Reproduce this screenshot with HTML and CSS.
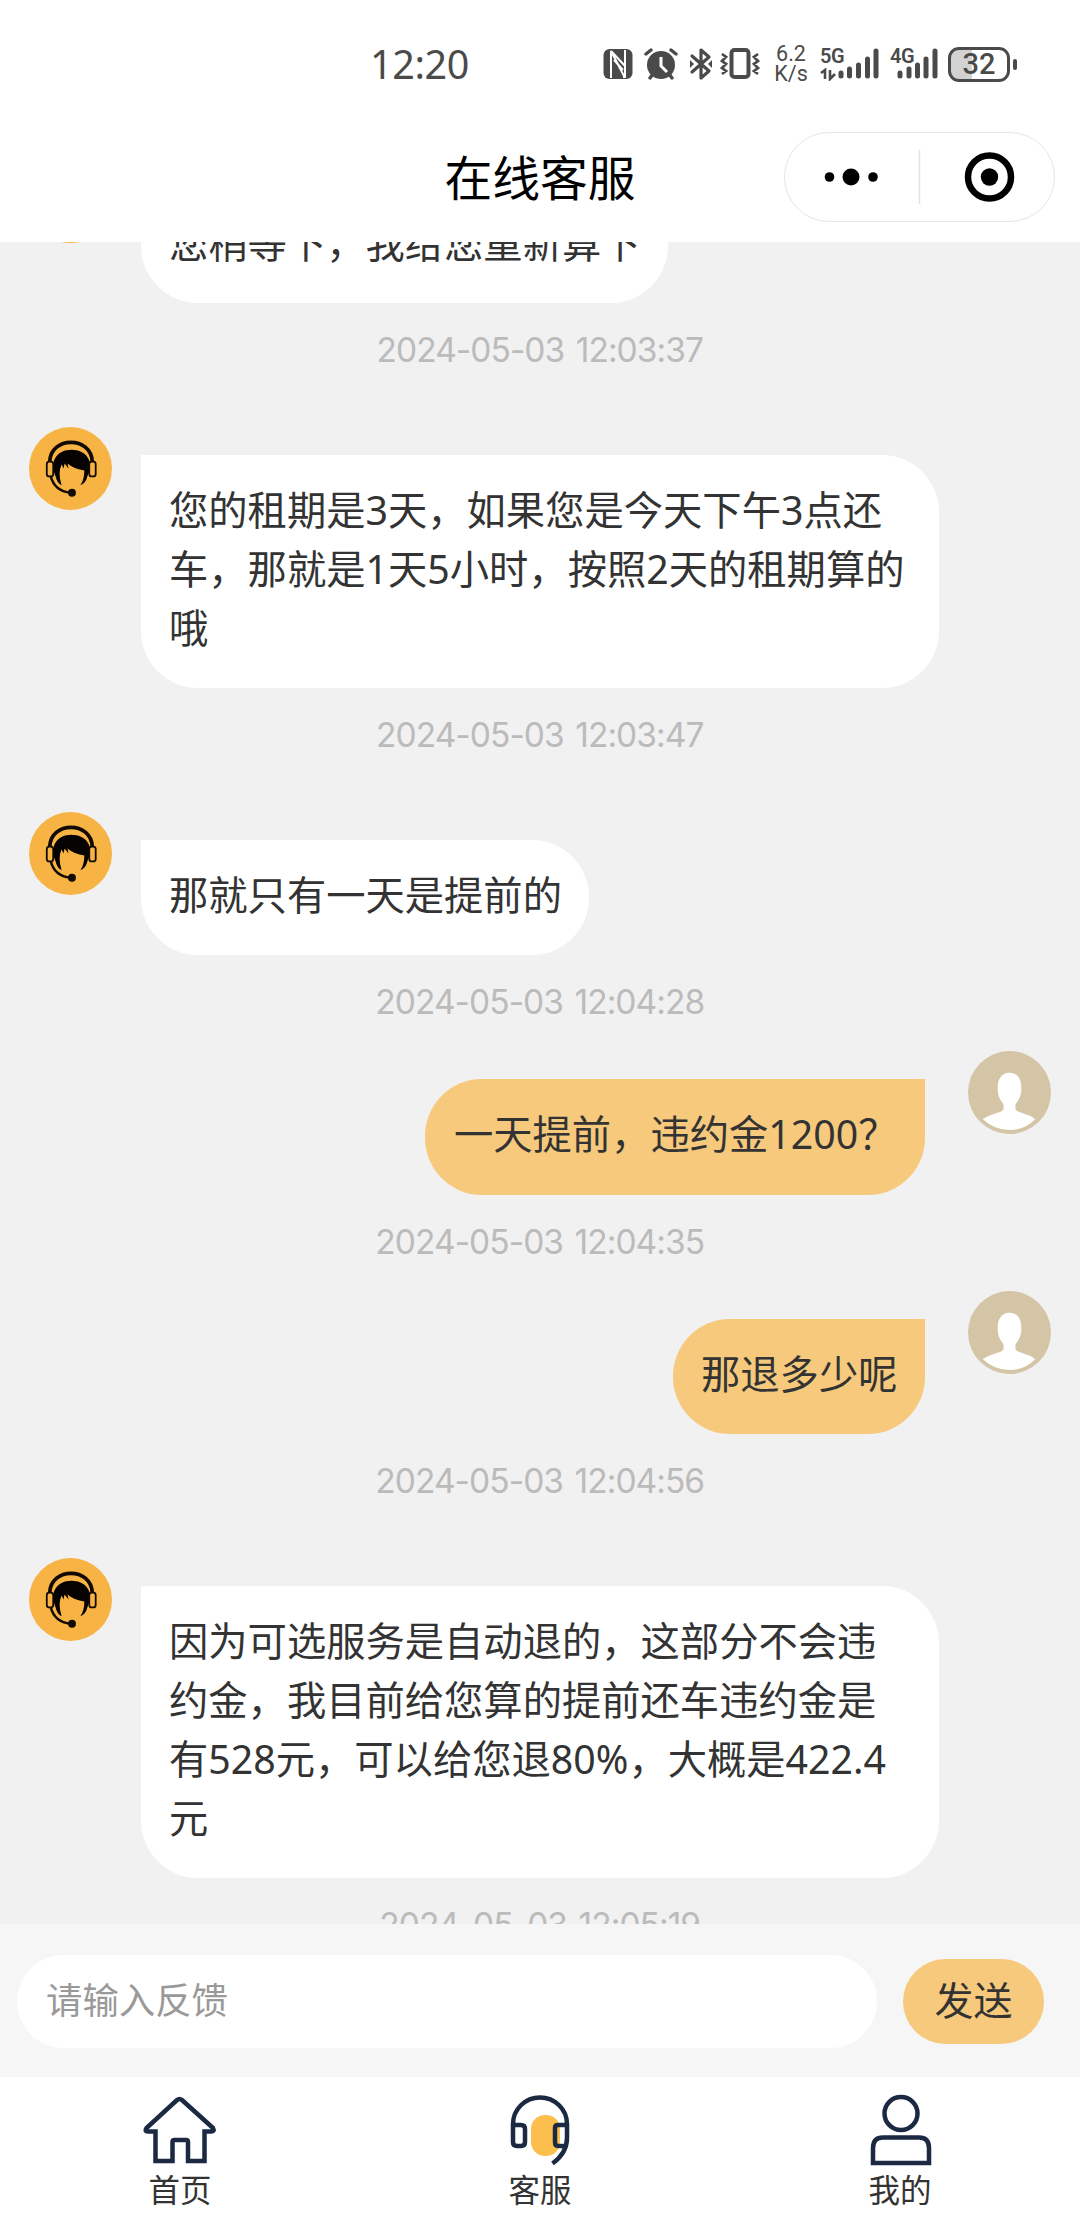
FILE: index.html
```html
<!DOCTYPE html>
<html lang="zh-CN">
<head>
<meta charset="utf-8">
<title>在线客服</title>
<link rel="stylesheet" href="styles.css">
</head>
<body>
<svg class="defs" width="0" height="0" aria-hidden="true">
  <symbol id="agent" viewBox="0 0 84 84">
    <circle cx="42" cy="42" r="42" fill="#f7b343"/>
    <path d="M21 35C22 9 63 9 64 35" fill="none" stroke="#120a05" stroke-width="3.800"/>
    <path d="M27 50Q28 56 33 59Q29 46 33 38L35 42L36 37L40 42L39 37Q46 43 56 44Q56 53 52 59Q58 56 59 50C67 34 57 23 43 23S20 34 27 50Z" fill="#050201"/>
    <rect x="18" y="35" width="6.500" height="15" rx="2.500" fill="#f7b343" stroke="#120a05" stroke-width="1.800"/>
    <rect x="61" y="35" width="6.500" height="15" rx="2.500" fill="#f7b343" stroke="#120a05" stroke-width="1.800"/>
    <path d="M22 50Q26 65 42 66.500" fill="none" stroke="#120a05" stroke-width="2.400"/>
    <circle cx="43.500" cy="66.500" r="4" fill="#120a05"/>
  </symbol>
  <symbol id="guest" viewBox="0 0 84 84">
    <circle cx="42" cy="42" r="42" fill="#d5c5a7"/>
    <path d="M42 22C50 22 54 28 54 38C54 46 51 50 48 54V59C50 63 61 63 68 69Q57 80 42 80T15 69C23 63 34 63 36 59V54C33 50 30 46 30 38C30 28 34 22 42 22Z" fill="#fff"/>
  </symbol>
</svg>
<div class="phone">
  <header class="status">
    <time class="clock">12:20</time>
    <div class="indicators">
      <svg class="nfc" width="30" height="32" viewBox="0 0 30 32"><rect x="0.500" y="1" width="29" height="30" rx="6" fill="#4a4a4a"/><path d="M8 30V3L21 28V30M8 3L22 18V30M22 2V18M11 12L20 22" fill="none" stroke="#fff" stroke-width="2"/></svg>
      <svg class="alarm" width="34" height="34" viewBox="0 0 34 34"><g fill="none" stroke="#4a4a4a" stroke-width="3.400" stroke-linecap="round"><path d="M2 7L7 3M32 7L27 3M6 31L9 27M28 31L25 27"/></g><circle cx="17" cy="18" r="14" fill="#4a4a4a"/><path d="M17 10V19L23 25" fill="none" stroke="#fff" stroke-width="3"/></svg>
      <svg class="bluetooth" width="24" height="34" viewBox="0 0 24 34"><path d="M3 9L20 24L12 31V3L20 10L3 25" fill="none" stroke="#4a4a4a" stroke-width="3.200" stroke-linejoin="round" stroke-linecap="round"/><path d="M1 13L5 17L1 21ZM23 13L19 17L23 21Z" fill="#4a4a4a"/></svg>
      <svg class="vibrate" width="40" height="34" viewBox="0 0 40 34"><rect x="11.500" y="3" width="17" height="27" rx="3" fill="none" stroke="#4a4a4a" stroke-width="4"/><path d="M2 7L6 10L2 14L6 17L2 21L6 24L2 27M38 7L34 10L38 14L34 17L38 21L34 24L38 27" fill="none" stroke="#4a4a4a" stroke-width="2.800"/></svg>
      <div class="speed"><span>6.2</span><span>K/s</span></div>
      <div class="signal five"><b>5G</b><svg width="59" height="34" viewBox="0 0 59 34"><g stroke="#4a4a4a" stroke-width="5" stroke-linecap="round"><path d="M21 26V29M29.500 22V29M38.500 18V29M47.500 12V29M56 4V29"/></g><path d="M1 26L5 23V32M10 23V32L15 27" fill="none" stroke="#4a4a4a" stroke-width="2.600"/></svg></div>
      <div class="signal four"><b>4G</b><svg width="48" height="34" viewBox="0 0 48 34"><g stroke="#4a4a4a" stroke-width="5" stroke-linecap="round"><path d="M10 26V29M19 22V29M27.500 18V29M36 12V29M45 4V29"/></g></svg></div>
      <div class="battery"><span class="cell">32</span><i class="tip"></i></div>
    </div>
  </header>
  <div class="titlebar">
    <h1>在线客服</h1>
    <div class="capsule">
      <svg width="269" height="88" viewBox="0 0 269 88"><g><circle cx="44.500" cy="44" r="4.800"/><circle cx="66" cy="44" r="8.500"/><circle cx="88" cy="44" r="4.800"/><circle cx="204.500" cy="44" r="21.500" fill="none" stroke="#000" stroke-width="6.500"/><circle cx="204.500" cy="44" r="8.700"/></g><path d="M134.500 17V71" stroke="#e2e2e2" stroke-width="1.500"/></svg>
    </div>
  </div>
  <main class="chat">
    <section class="message"><svg class="avatar"><use href="#agent"/></svg><p class="bubble">您稍等下，我给您重新算下</p></section>
    <time class="stamp">2024-05-03 12:03:37</time>
    <section class="message"><svg class="avatar"><use href="#agent"/></svg><p class="bubble">您的租期是3天，如果您是今天下午3点还车，那就是1天5小时，按照2天的租期算的哦</p></section>
    <time class="stamp">2024-05-03 12:03:47</time>
    <section class="message"><svg class="avatar"><use href="#agent"/></svg><p class="bubble">那就只有一天是提前的</p></section>
    <time class="stamp">2024-05-03 12:04:28</time>
    <section class="message mine"><p class="bubble">一天提前，违约金1200？</p><svg class="avatar"><use href="#guest"/></svg></section>
    <time class="stamp">2024-05-03 12:04:35</time>
    <section class="message mine"><p class="bubble">那退多少呢</p><svg class="avatar"><use href="#guest"/></svg></section>
    <time class="stamp">2024-05-03 12:04:56</time>
    <section class="message"><svg class="avatar"><use href="#agent"/></svg><p class="bubble">因为可选服务是自动退的，这部分不会违约金，我目前给您算的提前还车违约金是有528元，可以给您退80%，大概是422.4元</p></section>
    <time class="stamp">2024-05-03 12:05:19</time>
  </main>
  <form class="composer">
    <input class="field" type="text" placeholder="请输入反馈">
    <button class="send" type="button">发送</button>
  </form>
  <nav class="tabs">
    <a class="tab"><svg width="76" height="76" viewBox="0 0 76 76"><path d="M35 8Q37.500 6 40 8L71 36Q73 39.500 69 39.500H62.500V69H46V50Q46 48 44 48H32.500Q30.500 48 30.500 50V69H13.500V39.500H6Q2 39.500 4.500 36Z"/></svg><span>首页</span></a>
    <a class="tab"><svg width="76" height="76" viewBox="0 0 76 76"><rect class="glow" x="29" y="23" width="29" height="41" rx="14"/><path d="M11 50V32A27 26.500 0 0 1 65 32V46Q65 61 50.500 71.500M11 33H19Q23 33 23 37V50Q23 54 19 54H15Q11 54 11 50M65 33H56Q53 33 53 36V50Q53 54 56 54H64"/></svg><span>客服</span></a>
    <a class="tab"><svg width="76" height="76" viewBox="0 0 76 76"><circle cx="39" cy="21.500" r="16.500"/><path d="M11 71V56Q11 45.500 21 45.500H57Q67 45.500 67 56V71Z"/></svg><span>我的</span></a>
  </nav>
</div>
</body>
</html>
```

FILE: styles.css
```css
* { box-sizing: border-box; }
body { margin: 0; background: #fff; font-family: "Noto Sans", "Noto Sans CJK SC", sans-serif; color: #333; }
.defs { display: block; height: 0; }
.phone { display: flex; flex-direction: column; width: 1080px; height: 2228px; overflow: hidden; }

.status { display: flex; align-items: center; height: 128px; flex: none; padding-left: 370px; color: #4a4a4a; }
.clock { width: 233px; font-size: 39.5px; line-height: 50px; letter-spacing: -0.4px; }
.indicators { display: flex; align-items: center; height: 36px; }
.alarm { margin-left: 11px; }
.bluetooth { margin-left: 11px; }
.vibrate { margin-left: 7px; }
.speed { display: flex; flex-direction: column; width: 34px; margin-left: 14px; font: 21.5px/20px Roboto, sans-serif; text-align: center; white-space: nowrap; }
.signal { position: relative; height: 34px; }
.signal svg { display: block; }
.signal b { position: absolute; left: 0; top: 0; font: 600 20px/18px Roboto, sans-serif; letter-spacing: -0.5px; }
.five { margin-left: 12px; }
.four { margin-left: 11px; }
.battery { display: flex; align-items: center; gap: 3px; margin-left: 10px; }
.cell { width: 62px; height: 35px; border: 3px solid #4a4a4a; border-radius: 11px; background: linear-gradient(90deg, #d2d2d2 38%, #fff 38%); font: 500 29px/29px Roboto, sans-serif; text-align: center; }
.tip { width: 4px; height: 11px; border-radius: 2px; background: #4a4a4a; }

.titlebar { position: relative; display: flex; align-items: center; justify-content: center; flex: none; height: 114px; padding-bottom: 14px; }
h1 { margin: 0; color: #000; font-size: 47.8px; font-weight: 400; line-height: 64px; }
.capsule { position: absolute; left: 784px; top: 4px; width: 271px; height: 90px; border: 1.5px solid #e6e6e6; border-radius: 45px; }
.capsule svg { display: block; }

.chat { display: flex; flex-direction: column; flex: none; height: 1682px; padding: 0 29px 0 28.5px; overflow: hidden; background: #f1f1f1; }
.message { display: flex; align-items: flex-start; flex: none; gap: 29px; padding-top: 28px; }
.message:first-child { margin-top: -110px; }
.avatar { width: 83px; height: 83px; flex: none; }
.bubble { max-width: 798px; margin: 28px 0 0; padding: 26px 27.5px 30px 28.5px; border-radius: 0 57px 57px 57px; background: #fff; font-size: 39.3px; line-height: 59.1px; }
.mine { justify-content: flex-end; gap: 43px; padding-top: 0; }
.mine .bubble { border-radius: 57px 0 57px 57px; background: #f6c97c; }
.stamp { display: block; flex: none; height: 96px; color: #bbb; font-family: Inter, sans-serif; font-size: 33.5px; line-height: 94px; text-align: center; letter-spacing: -0.95px; word-spacing: 3px; }

.composer { display: flex; align-items: center; flex: none; gap: 26px; height: 153px; padding: 2px 36px 0 17px; background: #f6f6f6; }
.field { width: 860px; height: 93px; padding: 0 29px 4px; border: 0; border-radius: 47px; background: #fff; font: inherit; font-size: 36.4px; }
.field::placeholder { color: #999; opacity: 1; }
.send { width: 141px; height: 85px; padding: 0 0 8px; border: 0; border-radius: 43px; background: #f6c97c; color: #333; font: inherit; font-size: 39px; }

.tabs { display: grid; grid-template-columns: repeat(3, 1fr); flex: 1; padding-top: 15px; }
.tab { display: flex; flex-direction: column; align-items: center; font-size: 31.5px; line-height: 44px; }
.tab svg { fill: none; stroke: #1c2942; stroke-width: 4.5; }
.tab .glow { fill: #fcbf4e; stroke: none; }
```
